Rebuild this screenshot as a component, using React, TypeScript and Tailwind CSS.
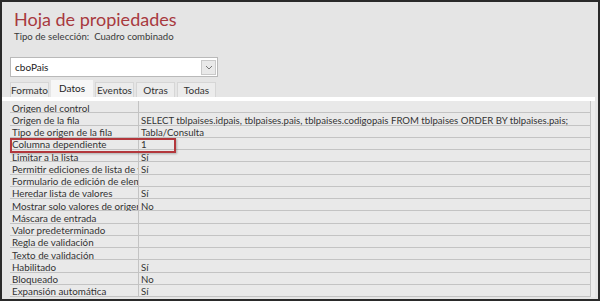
import React from 'react';

const ROWS: [string, string][] = [
  ['Origen del control', ''],
  ['Origen de la fila', 'SELECT tblpaises.idpais, tblpaises.pais, tblpaises.codigopais FROM tblpaises ORDER BY tblpaises.pais;'],
  ['Tipo de origen de la fila', 'Tabla/Consulta'],
  ['Columna dependiente', '1'],
  ['Limitar a la lista', 'Sí'],
  ['Permitir ediciones de lista de valores', 'Sí'],
  ['Formulario de edición de elementos de lista', ''],
  ['Heredar lista de valores', 'Sí'],
  ['Mostrar solo valores de origen de la fila', 'No'],
  ['Máscara de entrada', ''],
  ['Valor predeterminado', ''],
  ['Regla de validación', ''],
  ['Texto de validación', ''],
  ['Habilitado', 'Sí'],
  ['Bloqueado', 'No'],
  ['Expansión automática', 'Sí'],
];

const TABS = ['Formato', 'Datos', 'Eventos', 'Otras', 'Todas'];

export default function App() {
  return (
    <div className="w-[600px] h-[301px] overflow-hidden bg-[#e5e5e5] border-2 border-[#2a2a2a] font-['Lato',sans-serif] text-[#333]">
      <div className="pl-[12px] pt-[5px]">
        <h1 className="text-[18px] leading-[24px] text-[#a8393e]">Hoja de propiedades</h1>
        <p className="text-[9.6px] leading-[12px] text-[#3a3a3a]">
          Tipo de selección:&nbsp; Cuadro combinado
        </p>
      </div>

      <div className="ml-[8px] mt-[14px] w-[208px] h-[20px] bg-white border border-[#b9b9b9] flex items-center">
        <span className="flex-1 pl-[4px] text-[10px] text-[#222]">cboPais</span>
        <div className="w-[15px] h-[15px] mr-[1px] bg-[#e9e9e9] border border-[#c9c9c9] flex items-center justify-center">
          <svg width="8" height="5" viewBox="0 0 8 5">
            <path d="M1 1l3 3 3-3" fill="none" stroke="#777" strokeWidth="1" />
          </svg>
        </div>
      </div>

      <div className="ml-[8px] mt-[3px] flex items-end h-[17px] text-[10px]">
        {TABS.map((t) => (
          <div
            key={t}
            className={
              t === 'Datos'
                ? 'h-[17px] w-[42px] mr-[2px] bg-[#f6f6f6] flex items-start justify-center pt-[1px] text-[#222]'
                : 'h-[15px] w-[39px] mr-[2px] bg-[#ececec] border-t border-l border-r border-[#d6d6d6] flex items-center justify-center text-[#333]'
            }
          >
            {t}
          </div>
        ))}
      </div>

      <div className="h-[4px] bg-white mr-[3px]" />

      <div className="relative ml-[8px] mr-[3px] flex">
        <div className="flex-1 flex flex-col">
          {ROWS.map(([label, value]) => (
            <div key={label} className="h-[12.25px] flex border-b border-[#c3c3c3] bg-[#e9e9e9]">
              <div className="w-[129px] shrink-0 overflow-x-clip whitespace-nowrap pl-[2px] pt-[1.5px] text-[9.8px] leading-[11px] border-r border-[#c3c3c3]">
                {label}
              </div>
              <div className="flex-1 overflow-x-clip whitespace-nowrap pl-[2px] pt-[1.5px] text-[9.6px] leading-[11px] border-r border-[#c3c3c3]">
                {value}
              </div>
            </div>
          ))}
        </div>
        <div className="w-[4px] bg-[#ececec]" />
        <div className="absolute left-0 top-[37px] w-[166px] h-[15px] border-2 border-[#b3373c] shadow-[1px_1px_2px_rgba(0,0,0,0.25)]" />
      </div>
    </div>
  );
}
